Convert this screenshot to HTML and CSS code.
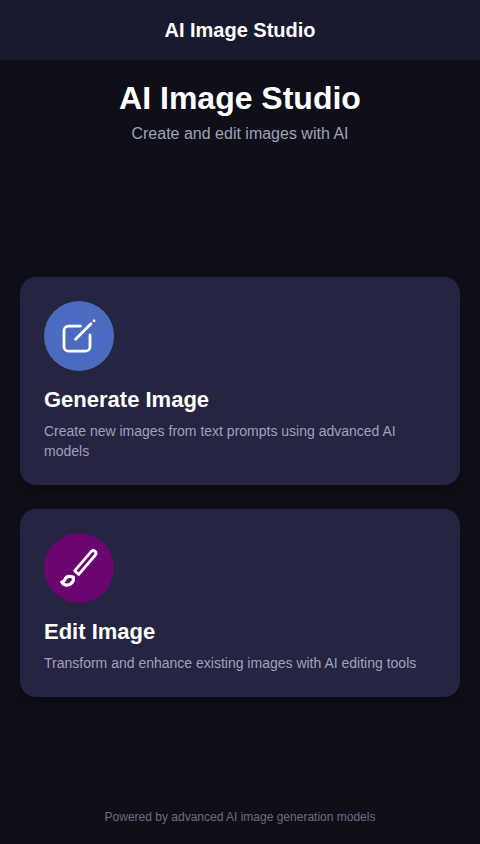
FILE: index.html
```html
<!DOCTYPE html>
<html lang="en">
<head>
<meta charset="utf-8">
<title>AI Image Studio</title>
<link rel="stylesheet" href="styles.css">
</head>
<body>
<div class="app">
  <header class="topbar">AI Image Studio</header>
  <main class="main">
    <section class="hero">
      <h1 class="hero-title">AI Image Studio</h1>
      <p class="hero-sub">Create and edit images with AI</p>
    </section>
    <section class="cards">
      <article class="card">
        <div class="icon icon-generate">
          <svg class="glyph" viewBox="0 0 70 70" width="70" height="70" fill="none" stroke="#fff" stroke-width="2.8" stroke-linecap="round" stroke-linejoin="round">
            <path d="M36.5 25.2H24.5a4.5 4.5 0 0 0-4.5 4.5v16a4.5 4.5 0 0 0 4.5 4.5h17a4.5 4.5 0 0 0 4.5-4.5V34"/>
            <path d="M31.6 38.2L47 22.8"/>
            <path d="M50 19.8h.1"/>
          </svg>
        </div>
        <h2 class="card-title">Generate Image</h2>
        <p class="card-text">Create new images from text prompts using advanced AI models</p>
      </article>
      <article class="card">
        <div class="icon icon-edit">
          <svg class="glyph" viewBox="0 0 70 70" width="70" height="70" fill="none" stroke="#fff" stroke-width="2.8" stroke-linecap="round" stroke-linejoin="round">
            <path d="M47.4 18.4a2.7 2.7 0 0 1 4 3.6L34.8 41.4l-4.2-3.6z"/>
            <path stroke-width="3.2" d="M29.4 44.4c.8 4-2.4 7.6-6.4 7.8-2.2.1-4-1-5.2-3.2 2.4 0 2.8-1.6 3.4-3 .8-1.8 2.8-2.8 4.8-2.6 1.4.1 2.6.4 3.4 1z"/>
          </svg>
        </div>
        <h2 class="card-title">Edit Image</h2>
        <p class="card-text">Transform and enhance existing images with AI editing tools</p>
      </article>
    </section>
    <footer class="footer">Powered by advanced AI image generation models</footer>
  </main>
</div>
</body>
</html>
```
FILE: styles.css
```css
* { box-sizing: border-box; }
html, body { margin: 0; height: 100%; }
body {
  background: #0f0f1a;
  color: #fff;
  font-family: "Liberation Sans", Arial, sans-serif;
}
.app { display: flex; flex-direction: column; height: 844px; overflow: hidden; }
.topbar {
  height: 60px;
  flex: none;
  display: flex;
  align-items: center;
  justify-content: center;
  background: #1a1a2e;
  font-size: 20px;
  font-weight: 700;
}
.main { flex: 1; display: flex; flex-direction: column; padding: 20px; min-height: 0; }
.hero { text-align: center; margin-bottom: 40px; }
.hero-title { margin: 0 0 8px; font-size: 32px; line-height: 37px; font-weight: 700; }
.hero-sub { margin: 0; font-size: 16px; line-height: 18px; color: #a0a0b8; }
.cards { flex: 1; display: flex; flex-direction: column; justify-content: center; gap: 24px; min-height: 0; }
.card {
  background: #252541;
  border-radius: 16px;
  padding: 24px;
  box-shadow: 0 4px 8px rgba(0, 0, 0, 0.3);
}
.icon {
  width: 70px;
  height: 70px;
  border-radius: 50%;
  margin-bottom: 16px;
}
.icon-generate { background: #4a6bc0; }
.icon-edit { background: #6a0572; }
.glyph { display: block; }
.card-title { margin: 0 0 8px; font-size: 22px; line-height: 26px; font-weight: 700; }
.card-text { margin: 0; font-size: 14px; line-height: 20px; color: #a0a0b8; }
.footer { padding-top: 20px; text-align: center; font-size: 12px; line-height: 14px; color: #6c6c80; }
```
